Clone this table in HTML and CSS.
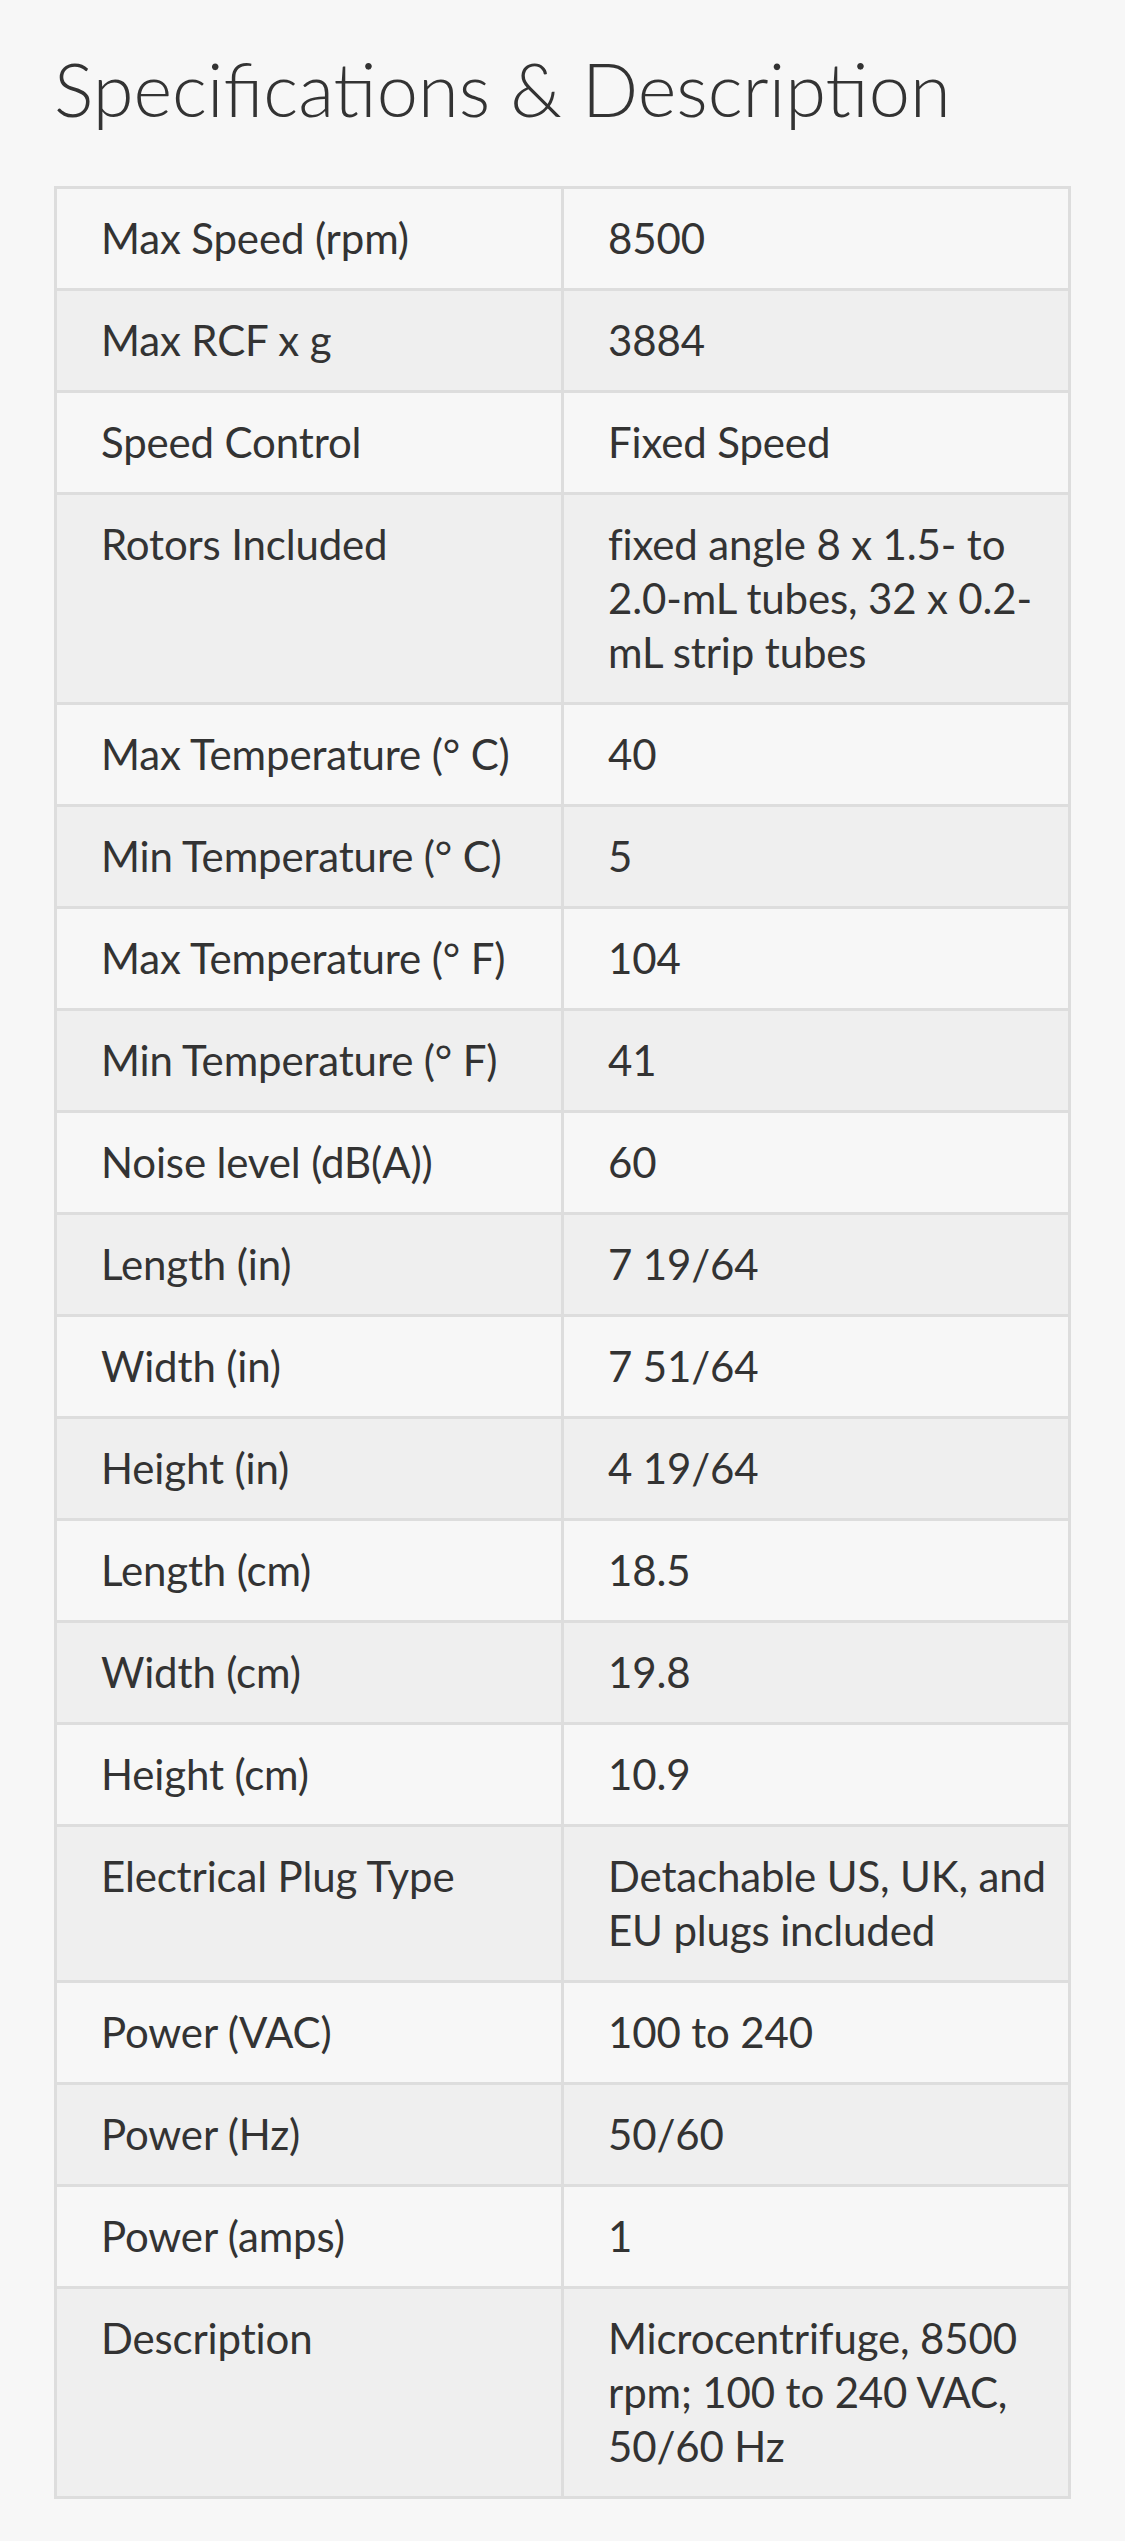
FILE: index.html
```html
<!DOCTYPE html>
<html lang="en">
<head>
<meta charset="utf-8">
<title>Specifications &amp; Description</title>
<link rel="stylesheet" href="styles.css">
</head>
<body>
<main class="page">
  <h1 class="title">Specifications &amp; Description</h1>
  <table class="specs">
    <colgroup><col class="col-name"><col class="col-value"></colgroup>
    <tbody>
      <tr><td>Max Speed (rpm)</td><td>8500</td></tr>
      <tr><td>Max RCF x g</td><td>3884</td></tr>
      <tr><td>Speed Control</td><td>Fixed Speed</td></tr>
      <tr><td>Rotors Included</td><td>fixed angle 8 x 1.5- to 2.0-mL tubes, 32 x 0.2-mL strip tubes</td></tr>
      <tr><td>Max Temperature (° C)</td><td>40</td></tr>
      <tr><td>Min Temperature (° C)</td><td>5</td></tr>
      <tr><td>Max Temperature (° F)</td><td>104</td></tr>
      <tr><td>Min Temperature (° F)</td><td>41</td></tr>
      <tr><td>Noise level (dB(A))</td><td>60</td></tr>
      <tr><td>Length (in)</td><td>7 19/64</td></tr>
      <tr><td>Width (in)</td><td>7 51/64</td></tr>
      <tr><td>Height (in)</td><td>4 19/64</td></tr>
      <tr><td>Length (cm)</td><td>18.5</td></tr>
      <tr><td>Width (cm)</td><td>19.8</td></tr>
      <tr><td>Height (cm)</td><td>10.9</td></tr>
      <tr><td>Electrical Plug Type</td><td>Detachable US, UK, and EU plugs included</td></tr>
      <tr><td>Power (VAC)</td><td>100 to 240</td></tr>
      <tr><td>Power (Hz)</td><td>50/60</td></tr>
      <tr><td>Power (amps)</td><td>1</td></tr>
      <tr><td>Description</td><td>Microcentrifuge, 8500 rpm; 100 to 240 VAC, 50/60 Hz</td></tr>
    </tbody>
  </table>
</main>
</body>
</html>
```
FILE: styles.css
```css
html, body {
  margin: 0;
  padding: 0;
  background: #f7f7f7;
}

body {
  font-family: Lato, "Open Sans", "Liberation Sans", sans-serif;
  color: #333333;
}

.page {
  padding: 44px 54px 42px;
}

.title {
  margin: 0 0 52px;
  font-size: 74px;
  line-height: 90px;
  font-weight: 300;
  color: #333333;
  letter-spacing: 0;
}

.specs {
  width: 100%;
  border-collapse: collapse;
  table-layout: fixed;
  font-size: 42px;
  line-height: 54px;
  letter-spacing: -0.15px;
}

.col-name,
.col-value {
  width: 50%;
}

.specs td {
  border: 3px solid #dddddd;
  padding: 22px 20px 23px 44px;
  vertical-align: top;
  text-align: left;
}

.specs tr:nth-child(odd) td {
  background: #f7f7f7;
}

.specs tr:nth-child(even) td {
  background: #efefef;
}
```
